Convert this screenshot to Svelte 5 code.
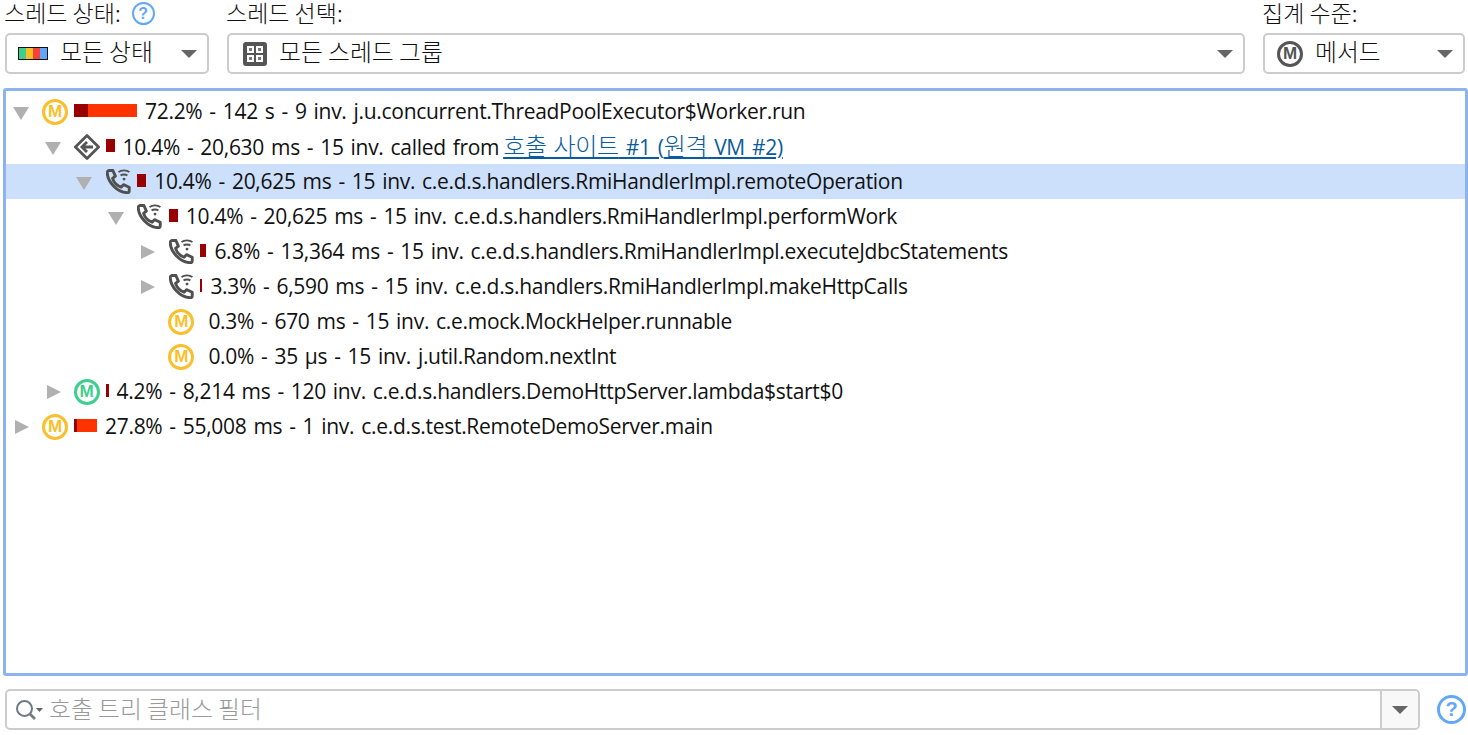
<script>
// call tree rows, bar widths are in px (dark = self time part)
const rows = [
  { depth: 0, open: true, icon: "m", dark: 14, bright: 49, text: "72.2% - 142 s - 9 inv. j.u.concurrent.ThreadPoolExecutor$Worker.run" },
  { depth: 1, open: true, icon: "back", dark: 9, bright: 0, text: "10.4% - 20,630 ms - 15 inv. called from ", link: true },
  { depth: 2, open: true, icon: "rmi", dark: 9, bright: 0, selected: true, text: "10.4% - 20,625 ms - 15 inv. c.e.d.s.handlers.RmiHandlerImpl.remoteOperation" },
  { depth: 3, open: true, icon: "rmi", dark: 9, bright: 0, text: "10.4% - 20,625 ms - 15 inv. c.e.d.s.handlers.RmiHandlerImpl.performWork" },
  { depth: 4, open: false, icon: "rmi", dark: 6, bright: 0, text: "6.8% - 13,364 ms - 15 inv. c.e.d.s.handlers.RmiHandlerImpl.executeJdbcStatements" },
  { depth: 4, open: false, icon: "rmi", dark: 2, bright: 0, text: "3.3% - 6,590 ms - 15 inv. c.e.d.s.handlers.RmiHandlerImpl.makeHttpCalls" },
  { depth: 4, leaf: true, icon: "m", dark: 0, bright: 0, text: "0.3% - 670 ms - 15 inv. c.e.mock.MockHelper.runnable" },
  { depth: 4, leaf: true, icon: "m", dark: 0, bright: 0, text: "0.0% - 35 µs - 15 inv. j.util.Random.nextInt" },
  { depth: 1, open: false, icon: "mg", dark: 3, bright: 0, text: "4.2% - 8,214 ms - 120 inv. c.e.d.s.handlers.DemoHttpServer.lambda$start$0" },
  { depth: 0, open: false, icon: "m", dark: 3, bright: 20, text: "27.8% - 55,008 ms - 1 inv. c.e.d.s.test.RemoteDemoServer.main" }
];
</script>

{#snippet help(cls)}
  <span class={"help " + cls}>?</span>
{/snippet}

{#snippet caret()}
  <span class="caret"></span>
{/snippet}

<div class="page">
  <div class="top">
    <div class="field">
      <div class="label">스레드 상태:{@render help("small")}</div>
      <div class="select">
        <span class="states"><i class="s1"></i><i class="s2"></i><i class="s3"></i><i class="s4"></i></span>
        <span class="value state-value">모든 상태</span>
        {@render caret()}
      </div>
    </div>
    <div class="field">
      <div class="label">스레드 선택:</div>
      <div class="select">
        <svg class="group-icon" width="24" height="24" viewBox="0 0 24 24">
          <rect x="0" y="0" width="24" height="24" rx="3" fill="#555"/>
          <rect x="4" y="4" width="7" height="7" fill="#fff"/>
          <rect x="13" y="4" width="7" height="7" fill="#fff"/>
          <rect x="4" y="13" width="7" height="7" fill="#fff"/>
          <rect x="13" y="13" width="7" height="7" fill="#fff"/>
          <rect x="6" y="6" width="3" height="3" fill="#777"/>
          <rect x="15" y="6" width="3" height="3" fill="#777"/>
          <rect x="6" y="15" width="3" height="3" fill="#777"/>
          <rect x="15" y="15" width="3" height="3" fill="#777"/>
        </svg>
        <span class="value">모든 스레드 그룹</span>
        {@render caret()}
      </div>
    </div>
    <div class="field">
      <div class="label">집계 수준:</div>
      <div class="select">
        <span class="m dark">M</span>
        <span class="value">메서드</span>
        {@render caret()}
      </div>
    </div>
  </div>

  <div class="tree">
    {#each rows as row}
      <div class="row" class:selected={row.selected} style="padding-left: {row.depth * 31.6 + 7}px">
        {#if row.leaf}
          <span class="toggle"></span>
        {:else if row.open}
          <span class="toggle"><span class="tri-down"></span></span>
        {:else}
          <span class="toggle"><span class="tri-right"></span></span>
        {/if}

        <span class="icon">
          {#if row.icon == "m"}
            <span class="m">M</span>
          {:else if row.icon == "mg"}
            <span class="m green">M</span>
          {:else if row.icon == "back"}
            <svg width="28" height="28" viewBox="0 0 28 28" fill="none" stroke="#555">
              <path d="M14 1.5 L26.5 14 L14 26.5 L1.5 14 Z" stroke-width="3" stroke-linejoin="round"/>
              <path d="M20.5 14 H9 M14 8.5 L8.5 14 L14 19.5" stroke-width="3"/>
            </svg>
          {:else}
            <svg width="25" height="25" viewBox="0 0 24 24" fill="none" stroke="#505050">
              <path d="M2.5 1.5 L6.5 1.2 L9 6.8 L6.3 9 C7.5 12.8 10.8 16 14.5 17.5 L16.8 15 L22.3 17.5 L22.3 21 C22.3 22.3 21.5 22.8 20.3 22.8 C10.5 22 1.5 12.5 1.2 3.5 C1.2 2.5 1.6 1.7 2.5 1.5 Z" stroke-width="2.8" stroke-linejoin="round"/>
              <path d="M12 3 C14.5 0.7 20 0.7 22.5 3" stroke-width="1.8"/>
              <path d="M14 6.3 C15.5 5 19 5 20.5 6.3" stroke-width="1.8"/>
              <circle cx="17.3" cy="9.7" r="1.4" fill="#505050" stroke="none"/>
            </svg>
          {/if}
        </span>

        <span class="bar" class:empty={row.dark == 0}>
          <span class="dark-part" style="width: {row.dark}px"></span>
          <span class="bright-part" style="width: {row.bright}px"></span>
        </span>

        <span class="text" class:with-link={row.link}>{row.text}{#if row.link}<a href="#site"><span class="ko">호출 사이트</span> #1 (<span class="ko">원격</span> VM #2)</a>{/if}</span>
      </div>
    {/each}
  </div>

  <div class="bottom">
    <div class="filter">
      <svg class="search" width="30" height="24" viewBox="0 0 30 24" fill="none">
        <circle cx="9.5" cy="10.5" r="7.5" stroke="#6f7a82" stroke-width="2"/>
        <path d="M15 16 L20 21" stroke="#6f7a82" stroke-width="2.6"/>
        <path d="M21 10 H28 L24.5 14 Z" fill="#666"/>
      </svg>
      <span class="placeholder">호출 트리 클래스 필터</span>
      <span class="drop">{@render caret()}</span>
    </div>
    {@render help("large")}
  </div>
</div>

<style>
  :global(body) {
    margin: 0;
    background: #fff;
  }

  .page {
    height: 735px;
    width: 1468px;
    overflow: hidden;
    display: flex;
    flex-direction: column;
    font-family: "Open Sans", "Noto Sans CJK KR", sans-serif;
    font-size: 21px;
    color: #111;
  }

  .top {
    display: grid;
    grid-template-columns: 204px 1fr 202px;
    column-gap: 18px;
    padding: 0 3px 0 5px;
    height: 74px;
  }

  .label {
    height: 33px;
    line-height: 24px;
    display: flex;
    align-items: flex-start;
    gap: 11px;
    font-family: "Noto Sans CJK KR", sans-serif;
    font-weight: 300;
    font-size: 23px;
    white-space: pre;
    margin-left: -1px;
  }

  .select {
    height: 41px;
    box-sizing: border-box;
    border: 2px solid #ccc;
    border-radius: 5px;
    display: flex;
    align-items: center;
    padding: 0 10px 0 14px;
    background: #fff;
  }

  .value {
    font-family: "Noto Sans CJK KR", sans-serif;
    font-weight: 300;
    font-size: 23.8px;
    margin-left: 12px;
    flex: 1;
    white-space: pre;
    position: relative;
    top: -3px;
  }

  .state-value {
    margin-left: 12px;
  }

  .caret {
    display: block;
    width: 0;
    height: 0;
    border-left: 8px solid transparent;
    border-right: 8px solid transparent;
    border-top: 8px solid #666;
  }

  .states {
    margin-left: -3px;
    display: flex;
    border: 1px solid #111;
    height: 11px;
    width: 28px;
  }

  .states i {
    flex: 1;
  }

  .s1 { background: #3ecf8e; }
  .s2 { background: #fbbf24; }
  .s3 { background: #f44336; }
  .s4 { background: #60a5fa; }

  .group-icon {
    flex: none;
  }

  .m {
    box-sizing: border-box;
    width: 26px;
    height: 26px;
    border: 3px solid #fbbf2d;
    border-radius: 50%;
    color: #fbbf2d;
    display: flex;
    align-items: center;
    justify-content: center;
    font-family: "Liberation Sans", sans-serif;
    font-weight: 700;
    font-size: 17px;
    flex: none;
  }

  .m.green {
    border-color: #3ecf8e;
    color: #3ecf8e;
  }

  .m.dark {
    border-color: #555;
    color: #555;
    margin-left: -2px;
  }

  .tree {
    margin: 14px 0 0 3px;
    height: 588px;
    box-sizing: border-box;
    border: 3px solid #8cb2f0;
    border-radius: 3px;
    padding-top: 3px;
  }

  .row {
    height: 35px;
    display: flex;
    align-items: center;
    box-sizing: border-box;
  }

  .row.selected {
    background: #cce0fc;
  }

  .toggle {
    width: 29px;
    flex: none;
    display: flex;
    align-items: center;
  }

  .tri-down {
    width: 0;
    height: 0;
    border-left: 8px solid transparent;
    border-right: 8px solid transparent;
    border-top: 13px solid #b0b0b0;
    margin-top: 4px;
  }

  .tri-right {
    width: 0;
    height: 0;
    border-top: 7.5px solid transparent;
    border-bottom: 7.5px solid transparent;
    border-left: 14px solid #b0b0b0;
    margin-left: 2px;
  }

  .icon {
    width: 26px;
    height: 28px;
    flex: none;
    display: flex;
    align-items: center;
    justify-content: center;
  }

  .bar {
    display: flex;
    height: 13px;
    margin: 0 8px 0 6px;
    position: relative;
    top: -1px;
  }

  .dark-part {
    background: #990000;
    display: block;
  }

  .bright-part {
    background: #ff3300;
    display: block;
  }

  .text {
    white-space: pre;
    position: relative;
    top: -1px;
    line-height: 28px;
    letter-spacing: -0.3px;
    word-spacing: 1.8px;
  }

  .text.with-link {
    top: 0;
  }

  .text a {
    color: #0b5c9e;
    text-decoration: underline;
    margin-left: -3px;
  }

  .ko {
    font-family: "Noto Sans CJK KR", sans-serif;
    font-weight: 300;
    font-size: 24px;
    line-height: 0;
  }

  .bottom {
    margin: 13px 0 0 5px;
    display: flex;
    align-items: center;
  }

  .filter {
    width: 1415px;
    height: 41px;
    box-sizing: border-box;
    border: 2px solid #ccc;
    border-radius: 5px;
    display: flex;
    align-items: center;
    padding-left: 8px;
    background: #fff;
  }

  .search {
    flex: none;
  }

  .placeholder {
    flex: 1;
    margin-left: 4px;
    color: #999;
    font-family: "Noto Sans CJK KR", sans-serif;
    font-weight: 300;
    font-size: 23.8px;
    position: relative;
    top: -2px;
  }

  .drop {
    width: 38px;
    height: 100%;
    box-sizing: border-box;
    border-left: 2px solid #ccc;
    background: #f8f8f8;
    display: flex;
    align-items: center;
    justify-content: center;
    border-radius: 0 4px 4px 0;
  }

  .help {
    box-sizing: border-box;
    border-radius: 50%;
    border: 2.5px solid #62a8f8;
    color: #62a8f8;
    display: inline-flex;
    align-items: center;
    justify-content: center;
    font-family: "Liberation Sans", sans-serif;
    font-weight: 700;
  }

  .help.small {
    width: 23px;
    height: 23px;
    font-size: 16px;
    margin-top: 2px;
  }

  .help.large {
    width: 29px;
    height: 29px;
    font-size: 20px;
    margin-left: 17px;
    border-width: 3px;
  }
</style>
